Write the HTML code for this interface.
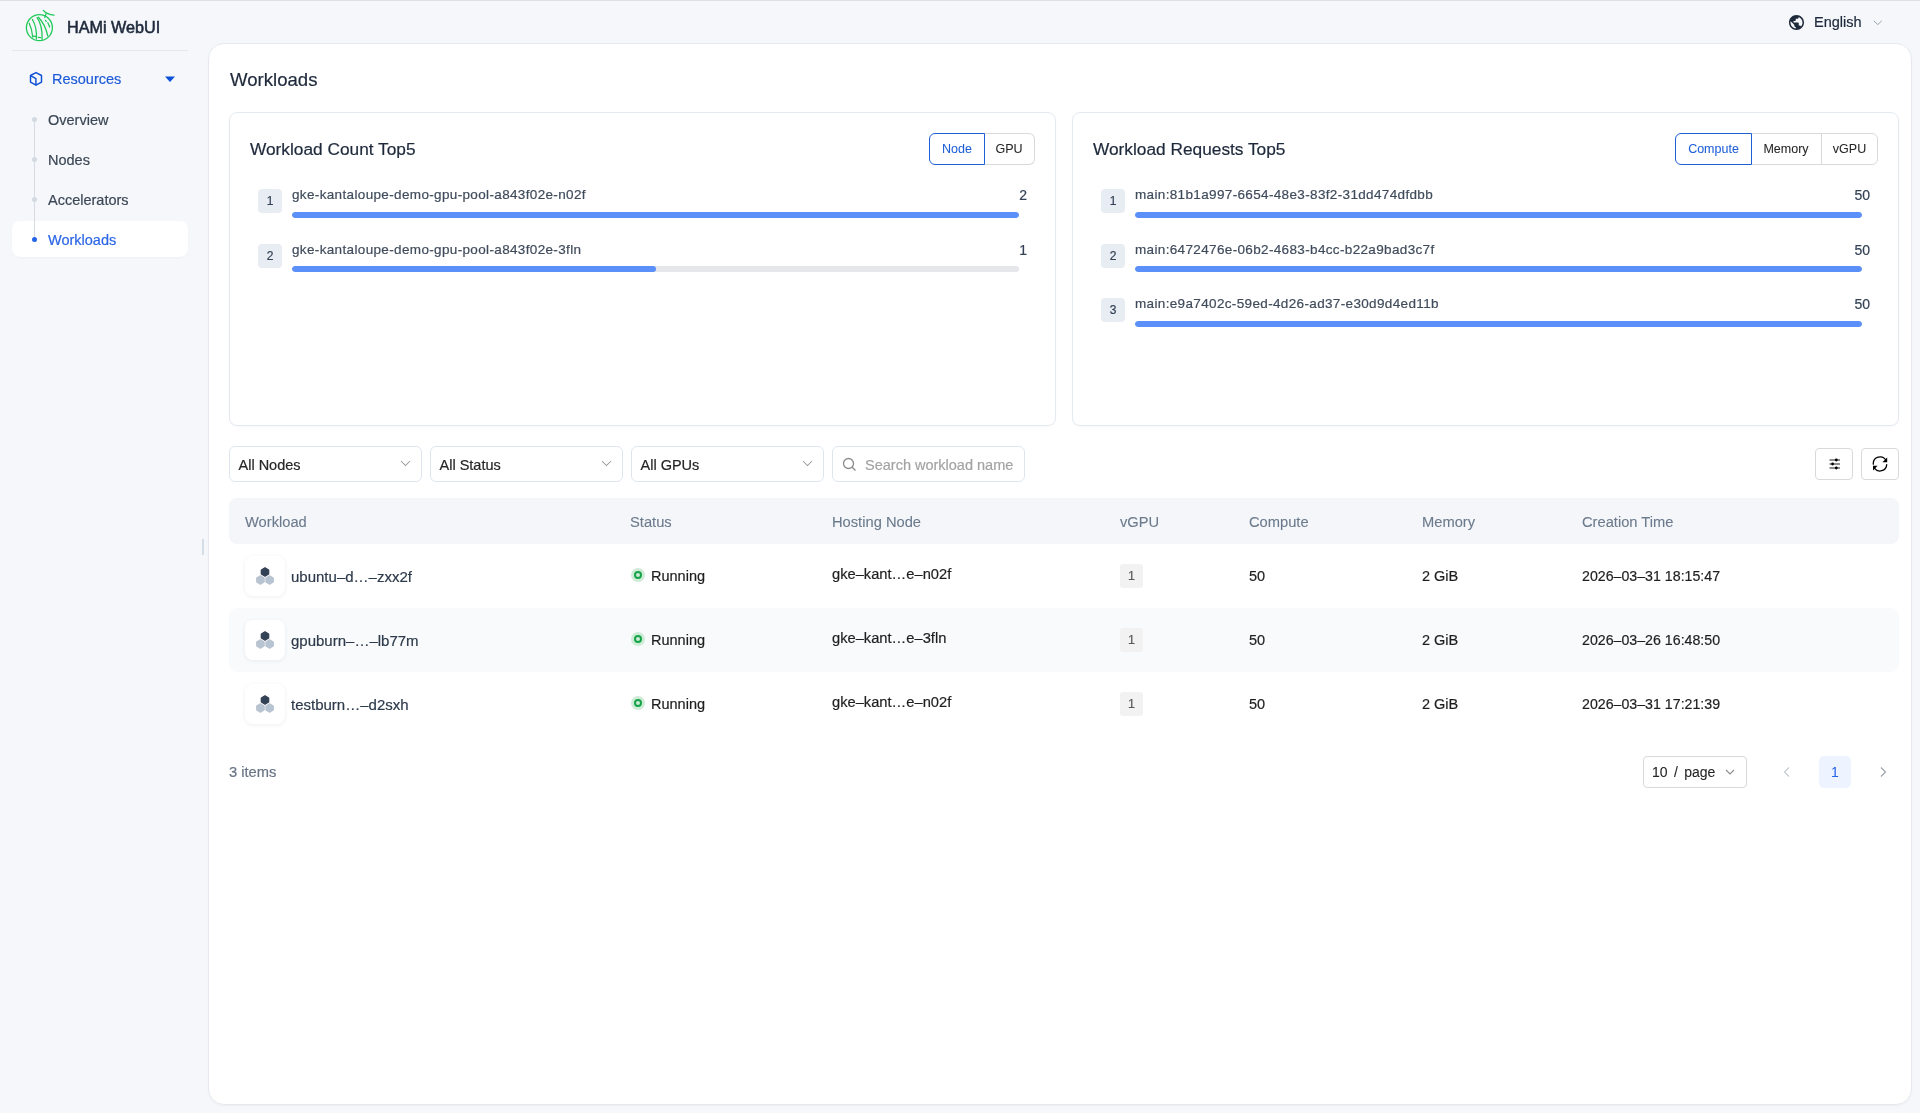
<!DOCTYPE html>
<html><head><meta charset="utf-8"><title>HAMi WebUI</title>
<style>
*{box-sizing:border-box;margin:0;padding:0}
html,body{width:1920px;height:1113px;overflow:hidden}
body{background:#f5f7fa;font-family:"Liberation Sans",sans-serif;color:#1f2937;position:relative}
.topline{left:0;top:0;width:1920px;height:1px;background:#dcdfe3}
.a{position:absolute;white-space:nowrap;will-change:transform}
.t,.sel span,.badge,.vg{-webkit-text-stroke:.2px currentColor}
.t{line-height:1}
/* sidebar */
.logo-text{left:66.7px;top:18.5px;font-size:16.2px;font-weight:normal;-webkit-text-stroke:.55px #1e293b;color:#1e293b}
.divider{left:12px;top:50px;width:176px;height:1px;background:#e3e8ee}
.res{left:52px;top:72px;font-size:14.5px;color:#1f5bd8}
.navi{left:48px;font-size:14.5px;color:#3b4756}
.navline{left:34px;top:119px;width:1px;height:121px;background:#d5dce4}
.dot{left:32px;width:5px;height:5px;border-radius:50%;background:#d3dae2}
.active{left:12px;top:221px;width:176px;height:36px;background:#fff;border-radius:8px;box-shadow:0 1px 2px rgba(15,23,42,.03)}
/* main */
.main{left:208px;top:43px;width:1704px;height:1062px;background:#fff;border:1px solid #e5e9ef;border-radius:16px;box-shadow:0 1px 2px rgba(15,23,42,.04)}
.ptitle{left:230px;top:71px;font-size:18.6px;color:#1e293b}
.card{top:112px;width:827px;height:314px;border:1px solid #e4e9f0;border-radius:8px;background:#fff;box-shadow:0 1px 2px rgba(15,23,42,.03)}
.ctitle{top:141px;font-size:17.3px;color:#1e293b}
.seg{top:133px;height:32px;border:1px solid #d9d9d9;font-size:12.5px;color:#262626;display:flex;align-items:center;justify-content:center;background:#fff}
.seg.on{border-color:#1f5fd6;color:#1f5fd6;z-index:2}
.seg{-webkit-text-stroke:.05px currentColor}
.badge{width:24px;height:24px;border-radius:4px;background:#e8edf3;color:#334155;font-size:12px;display:flex;align-items:center;justify-content:center}
.ilabel{font-size:13.5px;letter-spacing:.35px;color:#3f4b5b}
.ival{font-size:14px;color:#334155;text-align:right}
.bar{height:6px;border-radius:3px;background:#e5e7eb;overflow:hidden}
.bar i{display:block;height:100%;background:#5b8ff9;border-radius:3px}
/* filters */
.sel{top:446px;width:193px;height:36px;border:1px solid #dfe5ee;border-radius:6px;background:#fff;font-size:14.5px;color:#262626}
.sel span{position:absolute;left:8.5px;top:11px;line-height:1}
.sel svg{position:absolute;right:10px;top:13px}
.ibtn{top:448px;width:38px;height:32px;border:1px solid #d9d9d9;border-radius:4px;background:#fff}
.ibtn svg{position:absolute;left:50%;top:50%;transform:translate(-50%,-50%)}
/* table */
.thead{left:229px;top:498px;width:1670px;height:46px;background:#f4f6f9;border-radius:8px}
.th{top:515px;font-size:14.7px;color:#6b7a8c;-webkit-text-stroke:.1px currentColor}
.row2{left:229px;top:608px;width:1670px;height:64px;background:#f9fafb;border-radius:8px}
.wicon{left:245px;width:40px;height:40px;background:#fff;border-radius:8px;box-shadow:0 1px 4px rgba(15,23,42,.07)}
.wname{left:291px;font-size:15px;color:#2d3a4b}
.sdot{left:631px;width:14px;height:14px;border-radius:50%;background:#cdebd5}
.sdot:after{content:"";position:absolute;left:3px;top:3px;width:8px;height:8px;border-radius:50%;border:2px solid #16a34a;box-sizing:border-box}
.stext{left:651px;font-size:14.5px;color:#1f1f1f}
.host{left:832px;font-size:14.7px;color:#1f1f1f}
.vg{left:1120px;width:23px;height:24px;border-radius:3px;background:#f2f2f2;color:#595959;font-size:12.5px;display:flex;align-items:center;justify-content:center}
.cell{font-size:14.5px;color:#1f1f1f}
.foot{left:229px;top:765px;font-size:14.7px;color:#687484}
.psel{left:1643px;top:756px;width:104px;height:32px;border:1px solid #d9d9d9;border-radius:4px;background:#fff;font-size:14px;color:#262626}
.page1{left:1819px;top:756px;width:32px;height:32px;border-radius:5px;background:#eef4ff;color:#2563eb;font-size:14px;display:flex;align-items:center;justify-content:center}
.handle{left:202px;top:539px;width:2px;height:16px;background:#d5dde7}
</style></head>
<body>
<div class="a topline"></div>
<!-- logo -->
<svg class="a" style="left:24px;top:9px" width="32" height="34" viewBox="0 0 32 34">
 <g fill="none" stroke="#21c95a" stroke-width="1.3" stroke-linecap="round">
  <circle cx="15.4" cy="18.7" r="13"/>
  <path d="M19.3 1.4 Q23 5.5 30 6.2"/>
  <path d="M22 4.6 Q21.5 7 20.8 8.6"/>
  <path d="M5.2 14.3 Q8 20 8.7 28"/>
  <path d="M8.4 10.5 Q13 18 12.5 30"/>
  <path d="M13.1 8.6 Q18.5 16 18.1 30.6"/>
  <path d="M14.4 8.3 Q21 15 23.8 26.8"/>
  <path d="M21.5 11.5 L22.2 12.2"/>
  <path d="M23.8 13.8 Q25 16 25.6 18"/>
  <path d="M9.3 27.2 L11.6 27.5 M14.4 28.4 L16.6 28.6"/>
 </g>
</svg>
<div class="a t logo-text">HAMi WebUI</div>
<div class="a divider"></div>
<!-- resources -->
<svg class="a" style="left:28px;top:71px" width="15" height="16" viewBox="0 0 15 16"><g fill="none" stroke="#0d50d8" stroke-width="1.45" stroke-linejoin="round"><path d="M8 1.6 L13.5 4.5 V11.1 L8 14.2 L2.5 11.1 V4.5 Z"/><path d="M2.6 4.6 L7.9 7.7 V14"/></g></svg>
<div class="a t res">Resources</div>
<svg class="a" style="left:164px;top:76px" width="12" height="7" viewBox="0 0 12 7"><path d="M1 0.5 H11 L6 6 Z" fill="#0d50d8"/></svg>
<div class="a active"></div>
<div class="a navline"></div>
<div class="a dot" style="top:116.5px"></div>
<div class="a dot" style="top:156.5px"></div>
<div class="a dot" style="top:196.5px"></div>
<div class="a dot" style="top:236.5px;background:#2563eb"></div>
<div class="a t navi" style="top:112.5px">Overview</div>
<div class="a t navi" style="top:152.5px">Nodes</div>
<div class="a t navi" style="top:192.5px">Accelerators</div>
<div class="a t navi" style="top:232.5px;color:#2b66e6">Workloads</div>
<div class="a handle"></div>

<!-- language -->
<svg class="a" style="left:1788.5px;top:14.5px" width="15" height="15" viewBox="2 2 20 20"><path fill="#1e293b" d="M12 2C6.48 2 2 6.48 2 12s4.48 10 10 10 10-4.48 10-10S17.52 2 12 2zm-1 17.93c-3.95-.49-7-3.85-7-7.93 0-.62.08-1.21.21-1.79L9 15v1c0 1.1.9 2 2 2v1.93zm6.9-2.540c-.26-.81-1-1.39-1.9-1.39h-1v-3c0-.55-.45-1-1-1H8v-2h2c.55 0 1-.45 1-1V7h2c1.1 0 2-.9 2-2v-.41c2.93 1.19 5 4.060 5 7.41 0 2.08-.8 3.97-2.1 5.39z"/></svg>
<div class="a t" style="left:1814px;top:15px;font-size:14.5px;color:#1e293b">English</div>
<svg class="a" style="left:1873px;top:19.5px" width="10" height="6" viewBox="0 0 10 6"><path d="M0.8 0.8 L4.8 4.6 L8.8 0.8" fill="none" stroke="#9aa3ae" stroke-width="1"/></svg>

<!-- main -->
<div class="a main"></div>
<div class="a t ptitle">Workloads</div>

<!-- card 1 -->
<div class="a card" style="left:229px"></div>
<div class="a t ctitle" style="left:250px">Workload Count Top5</div>
<div class="a seg on t" style="left:929px;width:56px;border-radius:6px 0 0 6px">Node</div>
<div class="a seg t" style="left:984px;width:51px;border-left:none;border-radius:0 6px 6px 0">GPU</div>

<div class="a badge" style="left:258px;top:189px">1</div>
<div class="a t ilabel" style="left:292px;top:188px">gke-kantaloupe-demo-gpu-pool-a843f02e-n02f</div>
<div class="a t ival" style="left:1000px;width:27px;top:188px">2</div>
<div class="a bar" style="left:292px;top:212px;width:727px"><i style="width:100%"></i></div>

<div class="a badge" style="left:258px;top:244px">2</div>
<div class="a t ilabel" style="left:292px;top:243px">gke-kantaloupe-demo-gpu-pool-a843f02e-3fln</div>
<div class="a t ival" style="left:1000px;width:27px;top:243px">1</div>
<div class="a bar" style="left:292px;top:266px;width:727px"><i style="width:50%"></i></div>

<!-- card 2 -->
<div class="a card" style="left:1072px"></div>
<div class="a t ctitle" style="left:1093px">Workload Requests Top5</div>
<div class="a seg on t" style="left:1675px;width:77px;border-radius:6px 0 0 6px">Compute</div>
<div class="a seg t" style="left:1751px;width:71px;border-left:none">Memory</div>
<div class="a seg t" style="left:1821px;width:57px;border-radius:0 6px 6px 0">vGPU</div>

<div class="a badge" style="left:1101px;top:189px">1</div>
<div class="a t ilabel" style="left:1135px;top:188px">main:81b1a997-6654-48e3-83f2-31dd474dfdbb</div>
<div class="a t ival" style="left:1830px;width:40px;top:188px">50</div>
<div class="a bar" style="left:1135px;top:212px;width:727px"><i style="width:100%"></i></div>

<div class="a badge" style="left:1101px;top:244px">2</div>
<div class="a t ilabel" style="left:1135px;top:243px">main:6472476e-06b2-4683-b4cc-b22a9bad3c7f</div>
<div class="a t ival" style="left:1830px;width:40px;top:243px">50</div>
<div class="a bar" style="left:1135px;top:266px;width:727px"><i style="width:100%"></i></div>

<div class="a badge" style="left:1101px;top:298px">3</div>
<div class="a t ilabel" style="left:1135px;top:297px">main:e9a7402c-59ed-4d26-ad37-e30d9d4ed11b</div>
<div class="a t ival" style="left:1830px;width:40px;top:297px">50</div>
<div class="a bar" style="left:1135px;top:321px;width:727px"><i style="width:100%"></i></div>

<!-- filters -->
<div class="a sel" style="left:229px"><span>All Nodes</span><svg width="11" height="7" viewBox="0 0 11 7"><path d="M1 1 L5.5 5.5 L10 1" fill="none" stroke="#9a9a9a" stroke-width="1.05"/></svg></div>
<div class="a sel" style="left:430px"><span>All Status</span><svg width="11" height="7" viewBox="0 0 11 7"><path d="M1 1 L5.5 5.5 L10 1" fill="none" stroke="#9a9a9a" stroke-width="1.05"/></svg></div>
<div class="a sel" style="left:631px"><span>All GPUs</span><svg width="11" height="7" viewBox="0 0 11 7"><path d="M1 1 L5.5 5.5 L10 1" fill="none" stroke="#9a9a9a" stroke-width="1.05"/></svg></div>
<div class="a sel" style="left:832px"><svg style="left:8.5px;right:auto;top:10px" width="15" height="15" viewBox="0 0 15 15"><circle cx="6.5" cy="6.5" r="5" fill="none" stroke="#8c8c8c" stroke-width="1.3"/><path d="M10.2 10.2 L13.5 13.5" stroke="#8c8c8c" stroke-width="1.3"/></svg><span style="left:32px;color:#a3a3a3">Search workload name</span></div>

<div class="a ibtn" style="left:1815px"><svg width="12" height="12" viewBox="0 0 12 12" style="left:13px;top:9.2px;transform:none"><g stroke="#6b6b6b" stroke-width="1.5"><path d="M0.5 2 H11 M0.5 6 H11 M0.5 10 H11"/></g><g fill="#000"><circle cx="7.3" cy="2" r="1.4"/><circle cx="3.6" cy="6" r="1.4"/><circle cx="7.3" cy="10" r="1.4"/></g><path d="M0.5 2 H5 M0.5 10 H5 M5.5 6 H11" stroke="#fff" stroke-width="0" /></svg></div>
<div class="a ibtn" style="left:1861px"><svg width="18" height="18" viewBox="0 0 18 18" style="left:9px;top:6px;transform:none"><g fill="none" stroke="#000" stroke-width="1.3" stroke-linecap="round"><path d="M2.3 9.2 A6.8 6.8 0 0 1 15 5.4"/><path d="M15.7 9.6 A6.8 6.8 0 0 1 3.4 13.2"/></g><path d="M16.2 2.4 V7.2 H11.4 Z" fill="#000"/><path d="M2 10.8 H6.6 L2 15.6 Z" fill="#000"/></svg></div>

<!-- table -->
<div class="a thead"></div>
<div class="a t th" style="left:245px">Workload</div>
<div class="a t th" style="left:630px">Status</div>
<div class="a t th" style="left:832px">Hosting Node</div>
<div class="a t th" style="left:1120px">vGPU</div>
<div class="a t th" style="left:1249px">Compute</div>
<div class="a t th" style="left:1422px">Memory</div>
<div class="a t th" style="left:1582px">Creation Time</div>

<div class="a row2"></div>

<!-- rows generated -->
<!--ROWS-->
<div class="a wicon" style="top:556px"><svg class="a" style="left:10px;top:10px" width="20" height="20" viewBox="0 0 20 20"><g stroke-linejoin="round" stroke-width="1.2"><path d="M10 1.8 L13.7 3.9 V8.1 L10 10.2 L6.3 8.1 V3.9 Z" fill="#334155" stroke="#334155"/><path d="M5.4 9.8 L9.1 11.9 V16.1 L5.4 18.2 L1.7 16.1 V11.9 Z" fill="#b8c4d1" stroke="#b8c4d1"/><path d="M14.6 9.8 L18.3 11.9 V16.1 L14.6 18.2 L10.9 16.1 V11.9 Z" fill="#b8c4d1" stroke="#b8c4d1"/></g></svg></div>
<div class="a t wname" style="top:569px">ubuntu–d…–zxx2f</div>
<div class="a sdot" style="top:568px"></div>
<div class="a t stext" style="top:569px">Running</div>
<div class="a t host" style="top:567px">gke–kant…e–n02f</div>
<div class="a vg" style="top:564px">1</div>
<div class="a t cell" style="left:1249px;top:569px">50</div>
<div class="a t cell" style="left:1422px;top:569px">2 GiB</div>
<div class="a t cell" style="left:1582px;top:569px;font-size:14.2px">2026–03–31 18:15:47</div>
<div class="a wicon" style="top:620px"><svg class="a" style="left:10px;top:10px" width="20" height="20" viewBox="0 0 20 20"><g stroke-linejoin="round" stroke-width="1.2"><path d="M10 1.8 L13.7 3.9 V8.1 L10 10.2 L6.3 8.1 V3.9 Z" fill="#334155" stroke="#334155"/><path d="M5.4 9.8 L9.1 11.9 V16.1 L5.4 18.2 L1.7 16.1 V11.9 Z" fill="#b8c4d1" stroke="#b8c4d1"/><path d="M14.6 9.8 L18.3 11.9 V16.1 L14.6 18.2 L10.9 16.1 V11.9 Z" fill="#b8c4d1" stroke="#b8c4d1"/></g></svg></div>
<div class="a t wname" style="top:633px">gpuburn–…–lb77m</div>
<div class="a sdot" style="top:632px"></div>
<div class="a t stext" style="top:633px">Running</div>
<div class="a t host" style="top:631px">gke–kant…e–3fln</div>
<div class="a vg" style="top:628px">1</div>
<div class="a t cell" style="left:1249px;top:633px">50</div>
<div class="a t cell" style="left:1422px;top:633px">2 GiB</div>
<div class="a t cell" style="left:1582px;top:633px;font-size:14.2px">2026–03–26 16:48:50</div>
<div class="a wicon" style="top:684px"><svg class="a" style="left:10px;top:10px" width="20" height="20" viewBox="0 0 20 20"><g stroke-linejoin="round" stroke-width="1.2"><path d="M10 1.8 L13.7 3.9 V8.1 L10 10.2 L6.3 8.1 V3.9 Z" fill="#334155" stroke="#334155"/><path d="M5.4 9.8 L9.1 11.9 V16.1 L5.4 18.2 L1.7 16.1 V11.9 Z" fill="#b8c4d1" stroke="#b8c4d1"/><path d="M14.6 9.8 L18.3 11.9 V16.1 L14.6 18.2 L10.9 16.1 V11.9 Z" fill="#b8c4d1" stroke="#b8c4d1"/></g></svg></div>
<div class="a t wname" style="top:697px">testburn…–d2sxh</div>
<div class="a sdot" style="top:696px"></div>
<div class="a t stext" style="top:697px">Running</div>
<div class="a t host" style="top:695px">gke–kant…e–n02f</div>
<div class="a vg" style="top:692px">1</div>
<div class="a t cell" style="left:1249px;top:697px">50</div>
<div class="a t cell" style="left:1422px;top:697px">2 GiB</div>
<div class="a t cell" style="left:1582px;top:697px;font-size:14.2px">2026–03–31 17:21:39</div>
<!--/ROWS-->

<div class="a t foot">3 items</div>
<div class="a psel"><span class="a t" style="left:8px;top:8px;word-spacing:2.5px;-webkit-text-stroke:.1px currentColor">10 / page</span><svg class="a" style="left:81px;top:12px" width="10" height="6" viewBox="0 0 10 6"><path d="M1 1 L5 5 L9 1" fill="none" stroke="#8c8c8c" stroke-width="1.1"/></svg></div>
<svg class="a" style="left:1783px;top:766px" width="8" height="12" viewBox="0 0 8 12"><path d="M6 1.5 L1.5 6 L6 10.5" fill="none" stroke="#c4c8cf" stroke-width="1.1"/></svg>
<div class="a page1">1</div>
<svg class="a" style="left:1879px;top:766px" width="8" height="12" viewBox="0 0 8 12"><path d="M2 1.5 L6.5 6 L2 10.5" fill="none" stroke="#9aa0a8" stroke-width="1.1"/></svg>
</body></html>
